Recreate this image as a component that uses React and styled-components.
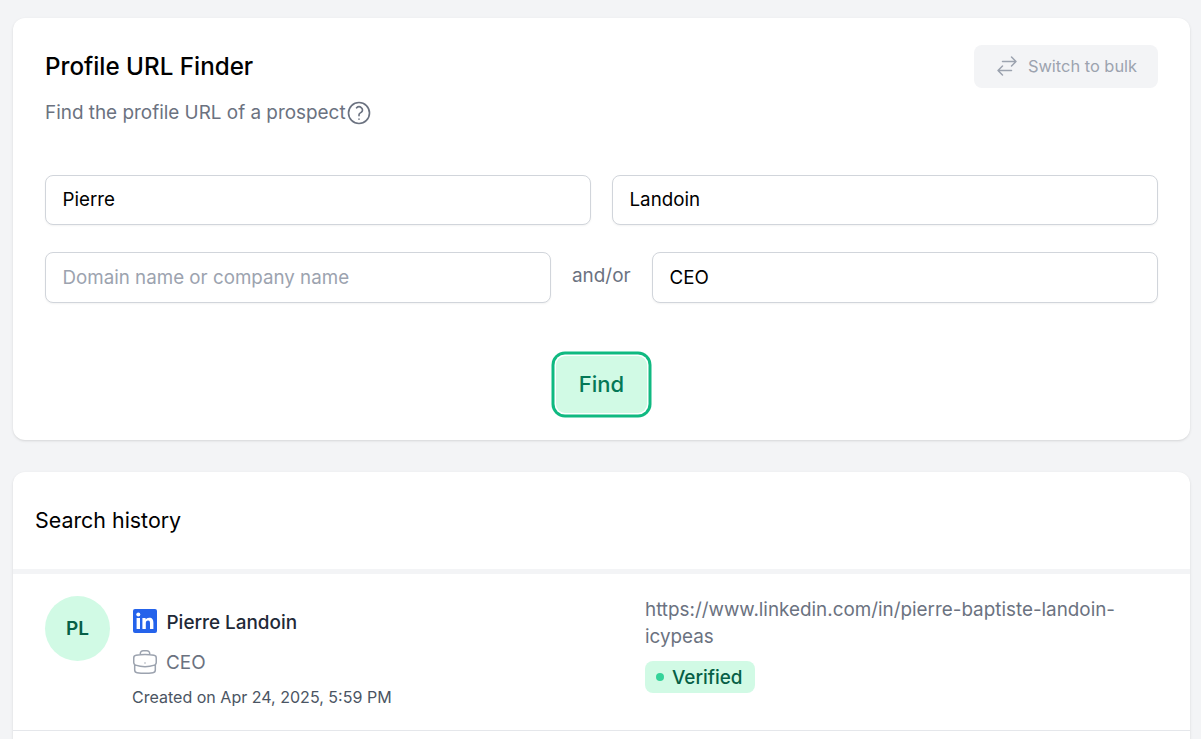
import React from "react";
import styled, { createGlobalStyle } from "styled-components";

const Global = createGlobalStyle`
  html, body { margin: 0; padding: 0; height: 100%; overflow: hidden; background: #f3f4f6; }
  body { font-family: Inter, "Liberation Sans", sans-serif; }
  * { box-sizing: border-box; }
`;

const Page = styled.div`
  display: flex;
  flex-direction: column;
  gap: 32px;
  padding: 18px 11px 0 13px;
  height: 739px;
  overflow: hidden;
`;

const Card = styled.section`
  flex: none;
  background: #fff;
  border-radius: 12px;
  box-shadow: 0 1px 3px rgba(0, 0, 0, 0.1), 0 1px 2px -1px rgba(0, 0, 0, 0.1);
`;

const FinderCard = styled(Card)`
  height: 422px;
  padding: 27px 32px 0;
`;

const Header = styled.header`
  display: flex;
  justify-content: space-between;
  align-items: flex-start;
  height: 130px;
`;

const Title = styled.h1`
  margin: 8px 0 0;
  font-size: 24.2px;
  line-height: 28px;
  font-weight: 500;
  color: #000;
`;

const Subtitle = styled.p`
  display: flex;
  align-items: center;
  margin: 19px 0 0;
  height: 26px;
  font-size: 18.9px;
  line-height: 26px;
  color: #6b7280;
`;

const OutlineIcon = styled.svg`
  flex: none;
  fill: none;
  stroke: ${(p) => p.$color};
  stroke-width: ${(p) => p.$stroke};
  stroke-linecap: round;
  stroke-linejoin: round;
`;

const HelpIcon = styled(OutlineIcon)`
  margin-left: -1px;
`;

const CaseIcon = styled(OutlineIcon)`
  margin: -3px -4px -3px -2px;
`;

const SwitchButton = styled.button`
  display: flex;
  align-items: center;
  justify-content: center;
  gap: 9px;
  width: 184px;
  height: 43px;
  padding: 0 0 2px;
  border: 0;
  border-radius: 8px;
  background: #f3f4f6;
  color: #9ca3af;
  font: 400 16.4px Inter, sans-serif;
`;

const Row = styled.div`
  display: flex;
  align-items: center;
  gap: ${(p) => p.$gap}px;
  margin-bottom: ${(p) => p.$mb}px;
`;

const Field = styled.input`
  flex: 1 1 0;
  min-width: 0;
  height: ${(p) => p.$h}px;
  padding: 0 16.5px ${(p) => p.$pb}px;
  border: 1px solid #d1d5db;
  border-radius: 8px;
  background: #fff;
  box-shadow: 0 1px 2px rgba(0, 0, 0, 0.05);
  color: #000;
  font: 400 18.75px Inter, sans-serif;
  &::placeholder { color: #9ca3af; opacity: 1; }
`;

const AndOr = styled.span`
  flex: none;
  width: 59px;
  font-size: 18.9px;
  color: #6b7280;
  position: relative;
  top: -2px;
`;

const Actions = styled.div`
  display: flex;
  justify-content: center;
  margin-top: 53px;
`;

const FindButton = styled.button`
  width: 91px;
  height: 57px;
  padding: 0 0 2px;
  border: 0;
  border-radius: 9px;
  background: #d1fae5;
  color: #047857;
  font: 500 22px Inter, sans-serif;
  box-shadow: 0 0 0 1.5px #fff, 0 0 0 4.5px #10b981;
`;

const HistoryCard = styled(Card)`
  height: 300px;
  border-radius: 12px 12px 0 0;
`;

const HistoryHeader = styled.h2`
  display: flex;
  align-items: center;
  height: 102px;
  margin: 0;
  padding: 0 22px 1px;
  border-bottom: 5px solid #f3f4f6;
  font-size: 21.4px;
  font-weight: 400;
  color: #000;
`;

const Entry = styled.article`
  display: flex;
  height: 157px;
  padding: 22px 32px 0;
  border-bottom: 1px solid #e5e7eb;
`;

const Avatar = styled.div`
  flex: none;
  display: flex;
  align-items: center;
  justify-content: center;
  width: 65px;
  height: 65px;
  border-radius: 50%;
  background: #d1fae5;
  color: #065f46;
  font-size: 19px;
  font-weight: 600;
`;

const Person = styled.div`
  width: 513px;
  margin-left: 22px;
  padding-top: 13px;
`;

const Line = styled.div`
  display: flex;
  align-items: center;
  gap: 10px;
  height: 26px;
  margin-bottom: ${(p) => p.$mb || 0}px;
  font-size: 18.9px;
  font-weight: ${(p) => p.$weight || 400};
  color: ${(p) => p.$color};
`;

const Created = styled.div`
  font-size: 16.05px;
  line-height: 22px;
  color: #4b5563;
`;

const Result = styled.div`
  width: 480px;
`;

const Url = styled.div`
  font-size: 18.85px;
  line-height: 27px;
  color: #6b7280;
  margin-bottom: 11px;
`;

const Badge = styled.span`
  display: inline-flex;
  align-items: center;
  gap: 8px;
  height: 32px;
  padding: 0 12px 0 11px;
  border-radius: 8px;
  background: #d1fae5;
  color: #065f46;
  font-size: 18.9px;
  font-weight: 500;
`;

const Dot = styled.i`
  width: 8px;
  height: 8px;
  border-radius: 50%;
  background: #34d399;
`;

const LogoMark = styled.svg`
  flex: none;
  margin-top: -3px;
  margin-left: 0.5px;
`;

const LinkedIn = () => (
  <LogoMark width="24" height="24" viewBox="0 0 24 24">
    <rect width="24" height="24" rx="2" fill="#2563eb" />
    <rect x="3.6" y="9" width="3.4" height="11" fill="#fff" />
    <circle cx="5.3" cy="5.6" r="2" fill="#fff" />
    <path d="M9.4 9h3.2v1.6c.6-1.1 1.9-1.9 3.6-1.9 3.3 0 4.2 2.1 4.2 5V20h-3.4v-5.6c0-1.5-.3-2.8-1.9-2.8-1.7 0-2.3 1.2-2.3 2.8V20H9.4z" fill="#fff" />
  </LogoMark>
);

export default function App() {
  return (
    <>
      <Global />
      <Page>
        <FinderCard>
          <Header>
            <div>
              <Title>Profile URL Finder</Title>
              <Subtitle>
                Find the profile URL of a prospect
                <HelpIcon width="28" height="28" viewBox="0 0 24 24" $color="#6b7280" $stroke={1.4}>
                  <path d="M9.879 7.519c1.171-1.025 3.071-1.025 4.242 0 1.172 1.025 1.172 2.687 0 3.712-.203.179-.43.326-.67.442-.745.361-1.45.999-1.45 1.827v.75M21 12a9 9 0 11-18 0 9 9 0 0118 0zm-9 5.25h.008v.008H12v-.008z" />
                </HelpIcon>
              </Subtitle>
            </div>
            <SwitchButton>
              <OutlineIcon width="24" height="24" viewBox="0 0 24 24" $color="#9ca3af" $stroke={1.5}>
                <path d="M7.5 21L3 16.5m0 0L7.5 12M3 16.5h13.5m0-13.5L21 7.5m0 0L16.5 12M21 7.5H7.5" />
              </OutlineIcon>
              Switch to bulk
            </SwitchButton>
          </Header>
          <Row $gap={21} $mb={27}>
            <Field $h={50} $pb={2} defaultValue="Pierre" />
            <Field $h={50} $pb={2} defaultValue="Landoin" />
          </Row>
          <Row $gap={21} $mb={0}>
            <Field $h={51} $pb={1} placeholder="Domain name or company name" />
            <AndOr>and/or</AndOr>
            <Field $h={51} $pb={1} defaultValue="CEO" />
          </Row>
          <Actions>
            <FindButton>Find</FindButton>
          </Actions>
        </FinderCard>
        <HistoryCard>
          <HistoryHeader>Search history</HistoryHeader>
          <Entry>
            <Avatar>PL</Avatar>
            <Person>
              <Line $weight={500} $color="#1f2937" $mb={14}>
                <LinkedIn />
                Pierre Landoin
              </Line>
              <Line $color="#6b7280" $mb={11}>
                <CaseIcon width="30" height="30" viewBox="0 0 24 24" $color="#9ca3af" $stroke={1.2}>
                  <path d="M20.25 14.15v4.25c0 1.094-.787 2.036-1.872 2.18-2.087.277-4.216.42-6.378.42s-4.291-.143-6.378-.42c-1.085-.144-1.872-1.086-1.872-2.18v-4.25m16.5 0a2.18 2.18 0 00.75-1.661V8.706c0-1.081-.768-2.015-1.837-2.175a48.114 48.114 0 00-3.413-.387m4.5 8.006c-.194.165-.42.295-.673.38A23.978 23.978 0 0112 15.75c-2.648 0-5.195-.429-7.577-1.22a2.016 2.016 0 01-.673-.38m0 0A2.18 2.18 0 013 12.489V8.706c0-1.081.768-2.015 1.837-2.175a48.111 48.111 0 013.413-.387m7.5 0V5.25A2.25 2.25 0 0013.5 3h-3a2.25 2.25 0 00-2.25 2.25v.894m7.5 0a48.667 48.667 0 00-7.5 0M12 12.75h.008v.008H12v-.008z" />
                </CaseIcon>
                CEO
              </Line>
              <Created>Created on Apr 24, 2025, 5:59 PM</Created>
            </Person>
            <Result>
              <Url>https://www.linkedin.com/in/pierre-baptiste-landoin-icypeas</Url>
              <Badge>
                <Dot />
                Verified
              </Badge>
            </Result>
          </Entry>
        </HistoryCard>
      </Page>
    </>
  );
}
